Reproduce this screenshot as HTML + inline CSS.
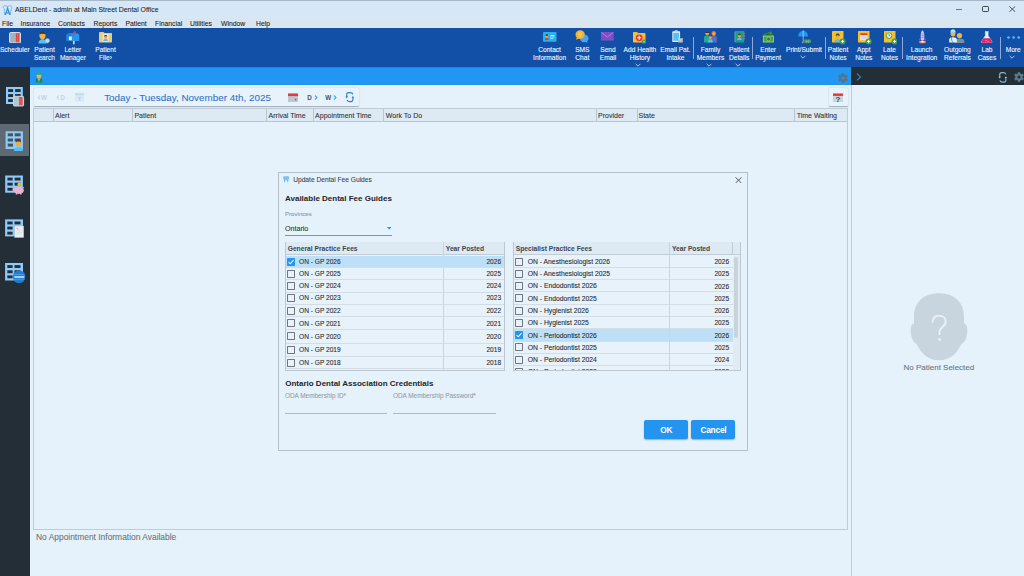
<!DOCTYPE html>
<html><head><meta charset="utf-8">
<style>
*{box-sizing:border-box;margin:0;padding:0}
html,body{width:1024px;height:576px;overflow:hidden;background:#e6f2fb;font-family:"Liberation Sans",sans-serif;color:#222}
.a{position:absolute}
.t{position:absolute;white-space:nowrap;line-height:1;-webkit-text-stroke:0.08px currentColor}
.t[style*="bold"]{-webkit-text-stroke:0}
#title{left:0;top:0;width:1024px;height:18px;background:#d6e8f7;border-top:1px solid #a9b8c6}
#menu{left:0;top:18px;width:1024px;height:10px;background:#d9e5ef}
#menu span{-webkit-text-stroke:0.08px currentColor;position:absolute;top:3.0px;font-size:6.8px;color:#222;line-height:1}
#tb{left:0;top:28px;width:1024px;height:39px;background:#1250a8}
.lbl{-webkit-text-stroke:0.1px currentColor;position:absolute;color:#f2f6fc;font-size:6.6px;line-height:8.4px;text-align:center;white-space:nowrap;transform:translateX(-50%)}
.sep{position:absolute;top:37px;width:1px;height:22px;background:#8fa9d3}
.chev{position:absolute;width:4px;height:4px;border-right:1px solid #c8d6ee;border-bottom:1px solid #c8d6ee;transform:rotate(45deg)}
#strip{left:30px;top:67px;width:821px;height:18px;background:linear-gradient(#1b7fd6,#2196f3 1.5px,#2196f3 17px,#1e8fe8)}
#rstrip{left:851px;top:67px;width:173px;height:18px;background:#232e37}
#side{left:0;top:67px;width:30px;height:509px;background:#232e37}
#grid{left:33px;top:108px;width:815px;height:422px;border:1px solid #c0cbd5;background:#e6f2fb}
#ghead{left:0;top:0;width:813px;height:13px;background:#dde9f3;border-bottom:1px solid #b9c5cf}
.col{position:absolute;top:0;width:1px;height:13px;background:#b9c5cf}
.ch{position:absolute;top:3px;font-size:7px;color:#333;line-height:1;white-space:nowrap;-webkit-text-stroke:0.08px currentColor}
#rpanel{left:851px;top:85px;width:173px;height:491px;border-left:1px solid #c3ccd4;background:#e6f2fb}
#dlg{left:278px;top:172px;width:470px;height:279px;border:1px solid #b6c0c9;background:#e6f2fb}
.dg{position:absolute;border:1px solid #b9c4ce;background:#e6f2fb;overflow:hidden}
.gh{position:absolute;left:0;top:0;height:14px;background:#dde9f3;border-bottom:1px solid #c3ced8}
.row{position:absolute;left:0;border-bottom:1px solid #d3dde6}
.cb{position:absolute;width:8px;height:8px;border:1px solid #6d747b;background:#eef5fb;border-radius:1px}
.cbon{background:#2196f3;border-color:#2196f3}
.rt{position:absolute;font-size:6.7px;color:#222;white-space:nowrap;line-height:1}
.yr{position:absolute;font-size:6.7px;color:#222;white-space:nowrap;line-height:1;text-align:right}
.btn{position:absolute;top:420px;height:19px;width:44px;background:#2394ef;border-radius:2px;box-shadow:0 1px 1.5px rgba(0,0,0,.3);color:#fff;font-weight:bold;font-size:8.4px;letter-spacing:-0.25px;text-align:center;line-height:21.6px;padding-left:0.8px}
</style></head><body>

<!-- Title bar -->
<div id="title" class="a">
  <svg class="a" style="left:2px;top:3.5px" width="11" height="10.5" viewBox="0 0 11 10.5"><path d="M1.2 2.8 C0.8 1 2.3 0.3 3.6 0.8 L5.5 1.5 L7.4 0.8 C8.7 0.3 10.2 1 9.8 2.8 C9.5 4.2 8.8 5.2 8.7 7 L8.3 9.8 M2.3 3.3 C2.5 4.5 2.2 5.5 2.3 7 L2.7 9.8" fill="none" stroke="#6fb3e6" stroke-width="0.9"/><path d="M3.2 10.2 L5.6 3.2 L8 10.2 M4.2 7.9 H7" fill="none" stroke="#3a8fd8" stroke-width="1.3"/></svg>
  <span class="t" style="left:15px;top:6px;font-size:6.9px;color:#1e1e1e">ABELDent - admin at Main Street Dental Office</span>
  <div class="a" style="left:956px;top:7.6px;width:6.3px;height:1px;background:#6f777e"></div>
  <div class="a" style="left:982.3px;top:4.8px;width:6.7px;height:6.1px;border:1px solid #3f4750;border-radius:1.2px"></div>
  <svg class="a" style="left:1009.2px;top:4.8px" width="6.6" height="6.2" viewBox="0 0 6.6 6.2"><path d="M0.3 0.3 L6.3 5.9 M6.3 0.3 L0.3 5.9" stroke="#3a3a3a" stroke-width="0.85"/></svg>
</div>

<!-- Menu -->
<div id="menu" class="a">
  <span style="left:2px">File</span>
  <span style="left:20.5px">Insurance</span>
  <span style="left:58px">Contacts</span>
  <span style="left:93.5px">Reports</span>
  <span style="left:125.5px">Patient</span>
  <span style="left:155px">Financial</span>
  <span style="left:190px">Utilities</span>
  <span style="left:221px">Window</span>
  <span style="left:256px">Help</span>
</div>

<!-- Toolbar -->
<div id="tb" class="a"></div>
<!-- Scheduler -->
<svg class="a" style="left:9px;top:31.5px" width="12" height="11.5" viewBox="0 0 12 11.5"><rect x="0.5" y="0.5" width="11" height="10.5" rx="1.2" fill="#a7b7c3" stroke="#d3dee6" stroke-width="1"/><rect x="6.8" y="1.2" width="3.6" height="9" fill="#e24a4a"/><path d="M3 1v9.5M5 1v9.5M8.6 1v9.5" stroke="#8ea0ad" stroke-width="0.4"/></svg>
<!-- Patient Search -->
<svg class="a" style="left:38px;top:30.5px" width="14" height="14" viewBox="0 0 14 14"><path d="M0.3 12.5 C0.6 9.5 2.5 8.3 4.4 8.3 C6.4 8.3 8.2 9.5 8.5 12.5Z" fill="#4fc3f7"/><rect x="3.5" y="7" width="2" height="2" fill="#e89a2c"/><ellipse cx="4.5" cy="4.6" rx="3.1" ry="3.6" fill="#f2b341"/><path d="M1.5 3.6 C1.5 1.2 3 0.4 4.5 0.4 C6 0.4 7.6 1.2 7.6 3.6 C6.5 2.4 3 2.4 1.5 3.6Z" fill="#2e3b48"/><circle cx="9.3" cy="9.8" r="2.3" fill="#bbdefb" stroke="#90a4ae" stroke-width="0.6"/><path d="M10.9 11.4 L12.6 13.2" stroke="#37474f" stroke-width="0.9"/></svg>
<!-- Letter Manager -->
<svg class="a" style="left:66px;top:30.5px" width="14" height="14" viewBox="0 0 14 14"><path d="M0.3 10 V5 C0.3 3.2 1.8 2.2 3.3 2.2 H10.5 C12 2.2 13.3 3.2 13.3 5 V10Z" fill="#2196f3"/><path d="M1.3 10 V5 C1.3 3.6 2.2 2.9 3.3 2.9 C4.5 2.9 5.5 3.6 5.5 5 V10Z" fill="#1976d2"/><rect x="2.8" y="5.4" width="3" height="3.9" fill="#e8eef2"/><rect x="6.9" y="10" width="1.8" height="3.3" fill="#e8c98a"/><path d="M7.6 1v4.5" stroke="#e53935" stroke-width="0.7"/><rect x="7.6" y="0.3" width="2.4" height="1.8" fill="#e53935"/></svg>
<!-- Patient File -->
<svg class="a" style="left:98.8px;top:32px" width="13.2" height="10.5" viewBox="0 0 13.2 10.5"><path d="M0 1 C0 0.4 0.4 0 1 0 H4.5 L5.5 1 H12.2 C12.8 1 13.2 1.4 13.2 2 V9.5 C13.2 10.1 12.8 10.5 12.2 10.5 H1 C0.4 10.5 0 10.1 0 9.5Z" fill="#e6c98c"/><rect x="3.5" y="2" width="6.2" height="7.8" fill="#f3e4bf"/><path d="M4.2 9 C4.4 7.3 5.5 6.8 6.6 6.8 C7.7 6.8 8.8 7.3 9 9Z" fill="#4fc3f7"/><ellipse cx="6.6" cy="5.1" rx="1.5" ry="1.8" fill="#f2a93b"/><path d="M5.1 4.6 C5.1 3.3 5.8 3 6.6 3 C7.4 3 8.1 3.3 8.1 4.6 C7.4 4 5.8 4 5.1 4.6Z" fill="#37474f"/></svg>
<!-- Contact Information -->
<svg class="a" style="left:543px;top:32px" width="13.5" height="9.7" viewBox="0 0 13.5 9.7"><rect x="0" y="0" width="13.5" height="9.7" rx="0.8" fill="#29b0f3"/><path d="M1.8 8 C1.9 6.6 2.8 6.1 3.8 6.1 C4.8 6.1 5.7 6.6 5.8 8Z" fill="#d84315"/><ellipse cx="3.8" cy="4.2" rx="1.3" ry="1.6" fill="#f2a93b"/><path d="M2.5 3.7 C2.5 2.6 3.1 2.2 3.8 2.2 C4.5 2.2 5.1 2.6 5.1 3.7Z" fill="#3e2723"/><path d="M7.3 3.5h4.2M7.3 5h4.2M7.3 6.5h2.6" stroke="#e3f2fd" stroke-width="0.7"/></svg>
<!-- SMS Chat -->
<svg class="a" style="left:575px;top:30px" width="14" height="13.5" viewBox="0 0 14 13.5"><path d="M5 5.5 C5 3.8 6.8 4.4 9 4.4 C11.6 4.4 13.5 6 13.5 8.2 C13.5 9.5 12.9 10.5 12 11.2 L12.8 13 L10.3 12 C9.9 12.1 9.5 12.2 9 12.2 C6.4 12.2 5 10.4 5 8.2Z" fill="#42a5f5"/><path d="M0.5 4.6 C0.5 2.2 2.6 0.3 5.2 0.3 C7.8 0.3 9.8 2.2 9.8 4.6 C9.8 7 7.8 8.9 5.2 8.9 C4.6 8.9 4.1 8.8 3.6 8.7 L1 9.7 L1.8 7.6 C1 6.8 0.5 5.8 0.5 4.6Z" fill="#f2b52f"/><path d="M3.3 3.3h3.8M3.3 4.7h3.8M3.3 6.1h2.5" stroke="#fbe3a0" stroke-width="0.6"/></svg>
<!-- Send Email -->
<svg class="a" style="left:601.3px;top:32.4px" width="12.7" height="8.6" viewBox="0 0 12.7 8.6"><rect x="0" y="0" width="12.7" height="8.6" fill="#7e4fc4"/><path d="M0.4 0.5 L6.35 5 L12.3 0.5" fill="none" stroke="#a98ae0" stroke-width="0.9"/></svg>
<!-- Add Health History -->
<svg class="a" style="left:632.8px;top:31.5px" width="13.5" height="12" viewBox="0 0 13.5 12"><path d="M0 1 C0 0.4 0.4 0 1 0 H4 L5 1 H11.5 C12.1 1 12.5 1.4 12.5 2 V9.5 C12.5 10.1 12.1 10.5 11.5 10.5 H1 C0.4 10.5 0 10.1 0 9.5Z" fill="#f0c02e"/><circle cx="6.2" cy="5.8" r="3.4" fill="#e53935"/><path d="M6.2 3.8v4M4.2 5.8h4" stroke="#fff" stroke-width="1.1"/><circle cx="11" cy="9.6" r="2.2" fill="#43a047"/><path d="M11 8.7v1.8M10.1 9.6h1.8" stroke="#c8e6c9" stroke-width="0.6"/></svg>
<!-- Email Pat Intake -->
<svg class="a" style="left:671.5px;top:29.8px" width="11" height="13" viewBox="0 0 11 13"><rect x="0.3" y="1.3" width="7.8" height="10.7" rx="0.6" fill="#eceff1"/><rect x="1.3" y="2.8" width="5.8" height="8" fill="#4fc3f7"/><rect x="2.5" y="0.3" width="3.4" height="1.8" rx="0.5" fill="#cfd8dc"/><rect x="6" y="8.3" width="4.8" height="4.2" fill="#b0bec5"/><path d="M6 8.3 L8.4 10.3 L10.8 8.3" fill="none" stroke="#eceff1" stroke-width="0.5"/></svg>
<!-- Family Members -->
<svg class="a" style="left:703.5px;top:31px" width="13" height="12" viewBox="0 0 13 12"><ellipse cx="3.2" cy="2.3" rx="1.8" ry="2.1" fill="#f2a93b"/><path d="M1.4 2 C1.4 0.6 2.3 0.2 3.2 0.2 C4.1 0.2 5 0.6 5 2Z" fill="#3e2723"/><path d="M0 11.5 V6.8 C0 5.4 1.2 4.6 3.2 4.6 C5.2 4.6 6.2 5.4 6.2 6.8 V11.5Z" fill="#26a69a"/><path d="M7 11.5 V6.8 C7 5.4 8 4.6 9.8 4.6 C11.6 4.6 12.8 5.4 12.8 6.8 V11.5Z" fill="#5c6bc0"/><ellipse cx="9.8" cy="2.4" rx="2.3" ry="2.4" fill="#ef6c38"/><ellipse cx="9.8" cy="2.7" rx="1.4" ry="1.7" fill="#f2a93b"/><ellipse cx="6.4" cy="6.6" rx="1.3" ry="1.4" fill="#f2a93b"/><path d="M4.3 11.5 V9.6 C4.3 8.7 5.2 8.2 6.4 8.2 C7.6 8.2 8.5 8.7 8.5 9.6 V11.5Z" fill="#4fc3f7"/></svg>
<!-- Patient Details -->
<svg class="a" style="left:734px;top:31px" width="11" height="11.5" viewBox="0 0 11 11.5"><rect x="0.8" y="0" width="9.4" height="11.5" rx="0.6" fill="#1e9e8a"/><path d="M10.2 1.5v2M10.2 4v2M10.2 6.5v2" stroke="#e57373" stroke-width="0.8"/><path d="M0.3 2h1.2M0.3 4h1.2M0.3 6h1.2M0.3 8h1.2M0.3 10h1.2" stroke="#cfd8dc" stroke-width="0.6"/><path d="M3.2 9 C3.3 7.3 4.3 6.7 5.5 6.7 C6.7 6.7 7.7 7.3 7.8 9Z" fill="#4fc3f7"/><ellipse cx="5.5" cy="4.6" rx="1.6" ry="2" fill="#f2a93b"/><path d="M3.9 4.2 C3.9 2.8 4.6 2.4 5.5 2.4 C6.4 2.4 7.1 2.8 7.1 4.2Z" fill="#37474f"/></svg>
<!-- Enter Payment -->
<svg class="a" style="left:761.8px;top:31px" width="12.5" height="12" viewBox="0 0 12.5 12"><path d="M0.3 4 L9.5 0.3 L11 4Z" fill="#2e7d32"/><path d="M1 3.2 L9 0.6 L10 3.3Z" fill="#388e3c"/><ellipse cx="5.8" cy="3.3" rx="1.6" ry="0.8" fill="#1b5e20"/><rect x="0.8" y="4.3" width="11.5" height="7.4" fill="#43a047"/><rect x="1.6" y="5.1" width="9.9" height="5.8" fill="none" stroke="#c8e6c9" stroke-width="0.5"/><ellipse cx="6.5" cy="8" rx="2" ry="1.9" fill="#2e7d32" stroke="#c8e6c9" stroke-width="0.5"/></svg>
<!-- Print/Submit -->
<svg class="a" style="left:798px;top:30px" width="13" height="13.5" viewBox="0 0 13 13.5"><path d="M0.3 6.8 C0.3 3 2.5 0.8 5.2 0.8 C7.9 0.8 10 3 10 6.8 C9.2 6 8.3 6 7.5 6.8 C6.7 6 5.9 6 5.2 6.8 C4.4 6 3.5 6 2.8 6.8 C2 6 1.1 6 0.3 6.8Z" fill="#2196f3"/><path d="M5.2 0.5v12 C5.2 13 4.2 13 4.2 12.2" fill="none" stroke="#cfd8dc" stroke-width="0.7"/><rect x="6.3" y="9.5" width="6.5" height="3.6" fill="#43a047" opacity="0.85"/><path d="M6.3 11.3h6.5M8.5 9.5v3.6M10.6 9.5v3.6" stroke="#a5d6a7" stroke-width="0.4"/></svg>
<!-- Patient Notes -->
<svg class="a" style="left:832.4px;top:31px" width="13.6" height="13.6" viewBox="0 0 13.6 13.6"><rect x="0" y="0" width="11.5" height="11.5" rx="0.4" fill="#f3c12d"/><path d="M2.5 11 C2.6 8.8 3.8 8 5.7 8 C7.6 8 8.8 8.8 8.9 11Z" fill="#4fc3f7"/><ellipse cx="5.7" cy="5.4" rx="2" ry="2.4" fill="#f2a93b"/><path d="M3.7 5 C3.7 3 4.6 2.4 5.7 2.4 C6.8 2.4 7.7 3 7.7 5 C7 4 4.4 4 3.7 5Z" fill="#37474f"/><circle cx="10.6" cy="10.4" r="3" fill="#43a047"/><path d="M10.6 8.9v3M9.1 10.4h3" stroke="#fff" stroke-width="1"/></svg>
<!-- Appt Notes -->
<svg class="a" style="left:858.2px;top:31px" width="13.6" height="13.6" viewBox="0 0 13.6 13.6"><rect x="0" y="0" width="11.5" height="11.5" rx="0.4" fill="#f3c12d"/><rect x="2.2" y="2.2" width="7.3" height="7" fill="#dfe6ea"/><rect x="2.2" y="2.2" width="7.3" height="1.8" fill="#e53935"/><path d="M3.5 5.5h4.8M3.5 7h4.8" stroke="#b0bec5" stroke-width="0.5"/><circle cx="10.6" cy="10.4" r="3" fill="#43a047"/><path d="M10.6 8.9v3M9.1 10.4h3" stroke="#fff" stroke-width="1"/></svg>
<!-- Late Notes -->
<svg class="a" style="left:883.9px;top:31px" width="13.6" height="13.6" viewBox="0 0 13.6 13.6"><rect x="0" y="0" width="11.5" height="11.5" rx="0.4" fill="#f3c12d"/><circle cx="5" cy="4.6" r="3.2" fill="#43a047"/><circle cx="5" cy="4.6" r="2.4" fill="#e3f2fd"/><path d="M5 3v1.8h1.2" fill="none" stroke="#37474f" stroke-width="0.6"/><circle cx="10.6" cy="10.4" r="3" fill="#43a047"/><path d="M10.6 8.9v3M9.1 10.4h3" stroke="#fff" stroke-width="1"/></svg>
<!-- Launch Integration -->
<svg class="a" style="left:917.5px;top:30px" width="9" height="14" viewBox="0 0 9 14"><path d="M4.5 0.3 C6 1.5 6.3 4 6.3 6 V10 H2.7 V6 C2.7 4 3 1.5 4.5 0.3Z" fill="#d1c4e9"/><path d="M2.7 7 L0.8 9.5 V10.5 H2.7Z M6.3 7 L8.2 9.5 V10.5 H6.3Z" fill="#7e57c2"/><path d="M3.6 4h1.8M3.6 5.7h1.8M3.6 7.4h1.8" stroke="#7e57c2" stroke-width="0.6"/><ellipse cx="4.5" cy="12" rx="3.5" ry="1.3" fill="#ff8a65"/><ellipse cx="4.5" cy="11.5" rx="1.4" ry="1" fill="#fff3e0"/></svg>
<!-- Outgoing Referrals -->
<svg class="a" style="left:949.3px;top:29px" width="15.5" height="14.2" viewBox="0 0 15.5 14.2"><path d="M6 14 V12 C6 10.3 7.8 9.5 10.5 9.5 C13.2 9.5 15.3 10.3 15.3 12 V14Z" fill="#78909c"/><circle cx="10.5" cy="6.6" r="2.6" fill="#f2b341"/><path d="M0.2 13.5 V10.8 C0.2 9 1.8 8.3 4 8.3 C6.2 8.3 7.8 9 7.8 10.8 V13.5Z" fill="#e3f2fd"/><path d="M2.5 8.6 C2.5 11 3 12.5 4 13.5" fill="none" stroke="#37474f" stroke-width="0.6"/><ellipse cx="4" cy="4.7" rx="2.4" ry="2.8" fill="#f2b341"/><path d="M1.5 3.2 C1.5 1 2.5 0.2 4 0.2 C5.5 0.2 6.5 1 6.5 3.2Z" fill="#b3e5fc"/><path d="M1.5 3.2h5" stroke="#81d4fa" stroke-width="0.8"/></svg>
<!-- Lab Cases -->
<svg class="a" style="left:981px;top:30.5px" width="11.5" height="12" viewBox="0 0 11.5 12"><path d="M4 0.6h3.5M4.4 0.6v4 L0.6 10.5 C0.3 11.2 0.7 11.8 1.4 11.8 H10.1 C10.8 11.8 11.2 11.2 10.9 10.5 L7.1 4.6 V0.6" fill="#e1f5fe" stroke="#b3e5fc" stroke-width="0.7"/><path d="M2.4 7.3 H9.1 L10.9 10.5 C11.2 11.2 10.8 11.8 10.1 11.8 H1.4 C0.7 11.8 0.3 11.2 0.6 10.5Z" fill="#e91e63"/><circle cx="5" cy="9.3" r="0.6" fill="#f8bbd0"/><circle cx="7" cy="10.2" r="0.5" fill="#f8bbd0"/></svg>
<!-- More -->
<svg class="a" style="left:1006.5px;top:35.5px" width="14" height="3" viewBox="0 0 14 3"><circle cx="1.5" cy="1.5" r="1.35" fill="#64b5f6"/><circle cx="6.6" cy="1.5" r="1.35" fill="#64b5f6"/><circle cx="11.7" cy="1.5" r="1.35" fill="#64b5f6"/></svg>
<div class="lbl" style="left:14.75px;top:45.9px">Scheduler</div>
<div class="lbl" style="left:44.5px;top:45.9px">Patient<br>Search</div>
<div class="lbl" style="left:72.9px;top:45.9px">Letter<br>Manager</div>
<div class="lbl" style="left:105.5px;top:45.9px">Patient<br>File›</div>
<div class="lbl" style="left:549.6px;top:45.9px">Contact<br>Information</div>
<div class="lbl" style="left:582.3px;top:45.9px">SMS<br>Chat</div>
<div class="lbl" style="left:608px;top:45.9px">Send<br>Email</div>
<div class="lbl" style="left:639.9px;top:45.9px">Add Health<br>History</div>
<svg class="a" style="left:635.40px;top:62.5px" width="6" height="4" viewBox="0 0 6 4"><path d="M0.6 0.8 L3 3.2 L5.4 0.8" fill="none" stroke="#c3d3ec" stroke-width="0.9"/></svg>
<div class="lbl" style="left:675.4px;top:45.9px">Email Pat.<br>Intake</div>
<div class="lbl" style="left:710.5px;top:45.9px">Family<br>Members</div>
<svg class="a" style="left:706.00px;top:62.5px" width="6" height="4" viewBox="0 0 6 4"><path d="M0.6 0.8 L3 3.2 L5.4 0.8" fill="none" stroke="#c3d3ec" stroke-width="0.9"/></svg>
<div class="lbl" style="left:739.2px;top:45.9px">Patient<br>Details</div>
<svg class="a" style="left:734.70px;top:62.5px" width="6" height="4" viewBox="0 0 6 4"><path d="M0.6 0.8 L3 3.2 L5.4 0.8" fill="none" stroke="#c3d3ec" stroke-width="0.9"/></svg>
<div class="lbl" style="left:768.2px;top:45.9px">Enter<br>Payment</div>
<div class="lbl" style="left:804px;top:45.9px">Print/Submit</div>
<svg class="a" style="left:799.50px;top:54.5px" width="6" height="4" viewBox="0 0 6 4"><path d="M0.6 0.8 L3 3.2 L5.4 0.8" fill="none" stroke="#c3d3ec" stroke-width="0.9"/></svg>
<div class="lbl" style="left:838px;top:45.9px">Patient<br>Notes</div>
<div class="lbl" style="left:863.8px;top:45.9px">Appt<br>Notes</div>
<div class="lbl" style="left:889.5px;top:45.9px">Late<br>Notes</div>
<div class="lbl" style="left:921.7px;top:45.9px">Launch<br>Integration</div>
<div class="lbl" style="left:957.4px;top:45.9px">Outgoing<br>Referrals</div>
<div class="lbl" style="left:987px;top:45.9px">Lab<br>Cases</div>
<div class="lbl" style="left:1013.2px;top:45.9px">More</div>
<svg class="a" style="left:1008.70px;top:54.5px" width="6" height="4" viewBox="0 0 6 4"><path d="M0.6 0.8 L3 3.2 L5.4 0.8" fill="none" stroke="#c3d3ec" stroke-width="0.9"/></svg>
<div class="sep" style="left:693.0px"></div>
<div class="sep" style="left:752.0px"></div>
<div class="sep" style="left:824.5px"></div>
<div class="sep" style="left:902.3px"></div>
<div class="sep" style="left:999.5px"></div>

<div id="rpanel" class="a"></div>
<!-- strips -->
<div id="strip" class="a"></div>
<div id="rstrip" class="a"></div>
<div id="side" class="a"></div>

<!-- strip icons -->
<svg class="a" style="left:35px;top:70.5px" width="8" height="12" viewBox="0 0 8 12"><path d="M0 12 V9.5 C0 8 1.5 7.4 4 7.4 C6.5 7.4 8 8 8 9.5 V12Z" fill="#1e9e8a"/><path d="M2.5 7.6 L4 10 L5.5 7.6" fill="#f2a93b"/><path d="M1.7 8 C1.7 10 2 10.8 2.6 11.2 M6.3 8 C6.3 10 6 10.8 5.4 11.2" stroke="#263238" stroke-width="0.6" fill="none"/><ellipse cx="4" cy="4.9" rx="2.4" ry="2.4" fill="#f2b341"/><path d="M1.4 3.8 C1.4 1 2.5 0 4 0 C5.5 0 6.6 1 6.6 3.8Z" fill="#26a69a"/></svg>
<svg class="a" style="left:838px;top:72.8px" width="10" height="10" viewBox="0 0 10 10"><path d="M3.95 1.56 L4.10 0.29 L5.90 0.29 L6.05 1.56 L7.46 2.37 L8.63 1.86 L9.53 3.42 L8.51 4.18 L8.51 5.82 L9.53 6.58 L8.63 8.14 L7.46 7.63 L6.05 8.44 L5.90 9.71 L4.10 9.71 L3.95 8.44 L2.54 7.63 L1.37 8.14 L0.47 6.58 L1.49 5.82 L1.49 4.18 L0.47 3.42 L1.37 1.86 L2.54 2.37Z" fill="#5a7384" stroke="#5a7384" stroke-width="0.5" stroke-linejoin="round"/><circle cx="5" cy="5" r="1.5" fill="#2196f3"/></svg>
<svg class="a" style="left:856px;top:73px" width="6" height="8" viewBox="0 0 6 8"><path d="M1 0.6 L4.6 4 L1 7.4" fill="none" stroke="#2f88cc" stroke-width="1.1"/></svg>
<svg class="a" style="left:998.3px;top:71.8px" width="10" height="11" viewBox="0 0 10 11"><path d="M7.9 2.4 C7.6 1.1 6.6 0.6 5 0.6 H3.6 C2.3 0.6 1.7 1.3 1.7 2.7 V5.1 M1.9 8.3 C2.2 9.6 3.2 10.1 4.8 10.1 H6.2 C7.4 10.1 7.9 9.4 7.9 8 V5.7" fill="none" stroke="#8db2cf" stroke-width="1.1"/><path d="M0.3 4.8 H3.1 L1.7 6.5Z M6.5 6.1 H9.3 L7.9 4.4Z" fill="#a3c6e4"/></svg>
<svg class="a" style="left:1013.5px;top:72.3px" width="10" height="10" viewBox="0 0 10 10"><path d="M3.95 1.56 L4.10 0.29 L5.90 0.29 L6.05 1.56 L7.46 2.37 L8.63 1.86 L9.53 3.42 L8.51 4.18 L8.51 5.82 L9.53 6.58 L8.63 8.14 L7.46 7.63 L6.05 8.44 L5.90 9.71 L4.10 9.71 L3.95 8.44 L2.54 7.63 L1.37 8.14 L0.47 6.58 L1.49 5.82 L1.49 4.18 L0.47 3.42 L1.37 1.86 L2.54 2.37Z" fill="#5c7a8e" stroke="#5c7a8e" stroke-width="0.5" stroke-linejoin="round"/><circle cx="5" cy="5" r="1.5" fill="#232e37"/></svg>

<!-- sidebar -->
<div class="a" style="left:0;top:123.5px;width:29px;height:32.5px;background:#5e6973"></div>
<svg class="a" style="left:0;top:84px" width="30" height="200" viewBox="0 0 30 200">
  <defs>
    <g id="gr"><rect x="6" y="0" width="16.8" height="17" fill="#90caf9"/><rect x="8.1" y="2.1" width="5" height="2.9" fill="#232e37"/><rect x="15.1" y="2.1" width="5.6" height="2.9" fill="#232e37"/><rect x="8.1" y="7.1" width="5" height="2.9" fill="#232e37"/><rect x="15.1" y="7.1" width="5.6" height="2.9" fill="#232e37"/><rect x="8.1" y="12.1" width="5" height="2.9" fill="#232e37"/><rect x="15.1" y="12.1" width="5.6" height="2.9" fill="#232e37"/></g>
  </defs>
  <use href="#gr" x="0" y="3"/>
  <rect x="13.4" y="12.3" width="10.2" height="9.7" rx="1" fill="#b5c4cf" stroke="#d5dde3" stroke-width="0.9"/><rect x="19" y="13" width="3.6" height="8.3" fill="#e35353"/>
</svg>
<svg class="a" style="left:0;top:130.5px" width="30" height="22" viewBox="0 0 30 22">
  <rect x="5.6" y="0.3" width="17.3" height="17.7" fill="#90caf9"/><rect x="7.7" y="2.3" width="5.3" height="3" fill="#4a545d"/><rect x="14.7" y="2.3" width="6" height="3" fill="#4a545d"/><rect x="7.7" y="7.5" width="5.3" height="3" fill="#4a545d"/><rect x="14.7" y="7.5" width="6" height="3" fill="#4a545d"/><rect x="7.7" y="12.6" width="5.3" height="3" fill="#4a545d"/>
  <path d="M14 20 C14.2 17 15.8 16 18.5 16 C21.2 16 22.8 17 23 20Z" fill="#4fc3f7"/><ellipse cx="18.5" cy="12.3" rx="2.6" ry="3.1" fill="#f2a93b"/><path d="M15.9 11.5 C15.9 8.6 17 7.8 18.5 7.8 C20 7.8 21.1 8.6 21.1 11.5 C20.3 10.3 16.7 10.3 15.9 11.5Z" fill="#37474f"/>
</svg>
<svg class="a" style="left:0;top:174.5px" width="30" height="22" viewBox="0 0 30 22">
  <rect x="5.2" y="0.5" width="17.7" height="17.2" fill="#90caf9"/><rect x="7.4" y="2.6" width="5.3" height="2.9" fill="#232e37"/><rect x="14.6" y="2.6" width="6" height="2.9" fill="#232e37"/><rect x="7.4" y="7.7" width="5.3" height="2.9" fill="#232e37"/><rect x="14.6" y="7.7" width="6" height="2.9" fill="#232e37"/><rect x="7.4" y="12.8" width="5.3" height="2.9" fill="#232e37"/>
  <ellipse cx="18.8" cy="15.3" rx="5" ry="3.6" fill="#eeb1d2"/><circle cx="14" cy="14.5" r="1.3" fill="#eeb1d2"/><rect x="15.7" y="17.5" width="1.6" height="2" fill="#eeb1d2"/><rect x="20" y="17.5" width="1.6" height="2" fill="#eeb1d2"/><path d="M22.5 11.5 L24 12.2 L23.5 14Z" fill="#eeb1d2"/><circle cx="19.3" cy="9.3" r="1.9" fill="#f5c000"/>
</svg>
<svg class="a" style="left:0;top:218.5px" width="30" height="20" viewBox="0 0 30 20">
  <rect x="5.1" y="0.4" width="17.9" height="17" fill="#90caf9"/><rect x="7.3" y="2.5" width="5.3" height="2.9" fill="#232e37"/><rect x="14.5" y="2.5" width="6" height="2.9" fill="#232e37"/><rect x="7.3" y="7.6" width="5.3" height="2.9" fill="#232e37"/><rect x="7.3" y="12.7" width="5.3" height="2.9" fill="#232e37"/>
  <rect x="14.7" y="7" width="9" height="11.5" fill="#eceff1" stroke="#b0bec5" stroke-width="0.5"/><path d="M16.5 9.3 L18.5 10.3" stroke="#e57373" stroke-width="0.7"/><path d="M16.3 12h5.5M16.3 13.6h5.5M16.3 15.2h5.5" stroke="#cfd8dc" stroke-width="0.5"/>
</svg>
<svg class="a" style="left:0;top:262.5px" width="30" height="21" viewBox="0 0 30 21">
  <rect x="5.1" y="0" width="17.9" height="17.5" fill="#90caf9"/><rect x="7.3" y="2.1" width="5.3" height="2.9" fill="#232e37"/><rect x="14.5" y="2.1" width="6" height="2.9" fill="#232e37"/><rect x="7.3" y="7.3" width="5.3" height="2.9" fill="#232e37"/><rect x="14.5" y="7.3" width="6" height="2.9" fill="#232e37"/><rect x="7.3" y="12.4" width="5.3" height="2.9" fill="#232e37"/>
  <circle cx="19.1" cy="13.8" r="6.3" fill="#1e7fd8"/><path d="M13.6 11.5 H24.6 M13.6 16.2 H24.6" stroke="#64b5f6" stroke-width="0.5"/><text x="19.1" y="15.3" font-family="Liberation Sans" font-size="4.2" font-weight="bold" fill="#fff" text-anchor="middle">www</text>
</svg>

<!-- date card -->
<div class="a" style="left:33.5px;top:88px;width:325.5px;height:18px;background:#e7f2fb;border-radius:1px;box-shadow:0 0.6px 1.2px rgba(60,80,100,.45)"></div>
<svg class="a" style="left:36.8px;top:95.2px" width="4" height="5" viewBox="0 0 4 5"><path d="M3 0.5 L1.2 2.5 L3 4.5" fill="none" stroke="#b5d5f2" stroke-width="1.1"/></svg>
<span class="t" style="left:41px;top:95px;font-size:6.3px;font-weight:bold;color:#c9d3db">W</span>
<svg class="a" style="left:55.8px;top:95.2px" width="4" height="5" viewBox="0 0 4 5"><path d="M3 0.5 L1.2 2.5 L3 4.5" fill="none" stroke="#b5d5f2" stroke-width="1.1"/></svg>
<span class="t" style="left:60.5px;top:95px;font-size:6.3px;font-weight:bold;color:#c9d3db">D</span>
<svg class="a" style="left:75px;top:93.3px" width="9" height="8.5" viewBox="0 0 9 8.5"><rect x="0" y="0" width="9" height="8.5" fill="#d9e9f7"/><rect x="0" y="0" width="9" height="2.2" fill="#c2ddf4"/><text x="4.5" y="7.6" font-family="Liberation Sans" font-size="5" font-weight="bold" fill="#b6cde2" text-anchor="middle">T</text></svg>
<span class="t" style="left:104.2px;top:92.5px;font-size:9.88px;color:#3373c6">Today - Tuesday, November 4th, 2025</span>
<svg class="a" style="left:288.3px;top:92.8px" width="10" height="9" viewBox="0 0 10 9"><rect x="0" y="0.5" width="10" height="8.5" rx="0.5" fill="#b8c9d6"/><rect x="0" y="0.5" width="10" height="2.6" fill="#e53935"/><rect x="2.3" y="0" width="0.8" height="1.3" fill="#90a4ae"/><rect x="6.9" y="0" width="0.8" height="1.3" fill="#90a4ae"/><rect x="6.8" y="5.8" width="1.5" height="1.5" fill="#e53935"/></svg>
<span class="t" style="left:307.3px;top:95px;font-size:6.3px;font-weight:bold;color:#4a5560">D</span>
<svg class="a" style="left:313.8px;top:95px" width="4" height="5" viewBox="0 0 4 5"><path d="M1 0.5 L3 2.5 L1 4.5" fill="none" stroke="#42a5f5" stroke-width="1.1"/></svg>
<span class="t" style="left:325.3px;top:95px;font-size:6.3px;font-weight:bold;color:#4a5560">W</span>
<svg class="a" style="left:332.5px;top:95px" width="4" height="5" viewBox="0 0 4 5"><path d="M1 0.5 L3 2.5 L1 4.5" fill="none" stroke="#42a5f5" stroke-width="1.1"/></svg>
<svg class="a" style="left:344.5px;top:92.3px" width="10" height="10.5" viewBox="0 0 10 10.5"><path d="M7.9 2.3 C7.6 1 6.6 0.6 5 0.6 H3.6 C2.3 0.6 1.7 1.3 1.7 2.6 V4.9 M1.9 7.9 C2.2 9.2 3.2 9.6 4.8 9.6 H6.2 C7.4 9.6 7.9 8.9 7.9 7.6 V5.4" fill="none" stroke="#2b7bd6" stroke-width="1.15"/><path d="M0.3 4.6 H3.1 L1.7 6.3Z M6.5 5.8 H9.3 L7.9 4.1Z" fill="#2b7bd6"/></svg>
<!-- help btn -->
<div class="a" style="left:829px;top:88px;width:18.5px;height:18px;background:#e7f2fb;border-radius:1px;box-shadow:0 0.6px 1.2px rgba(60,80,100,.45)"></div>
<svg class="a" style="left:833.3px;top:92.7px" width="10" height="9.3" viewBox="0 0 10 9.3"><rect x="0" y="0.5" width="10" height="8.8" rx="0.5" fill="#c5d5e2"/><rect x="0" y="0.5" width="10" height="2.4" fill="#e53935"/><text x="5" y="9.2" font-family="Liberation Sans" font-size="8" font-weight="bold" fill="#37474f" text-anchor="middle">?</text></svg>

<!-- right panel content -->
<svg class="a" style="left:910px;top:292.5px" width="58" height="68" viewBox="0 0 58 68"><path d="M29 0.3 C44 0.3 54 9 54 24 L54 30.5 C56.5 31 57.5 34 57.3 38 C57 44.5 55 49.5 51.3 51 C47 61 39 67.3 29 67.3 C19 67.3 11 61 6.7 51 C3 49.5 1 44.5 0.7 38 C0.5 34 1.5 31 4 30.5 L4 24 C4 9 14 0.3 29 0.3Z" fill="#c9d5de"/><path d="M22.6 29.5 C22.6 25 25.5 22.8 29.2 22.8 C33 22.8 35.8 25.2 35.8 28.8 C35.8 33.5 29.5 34 29.5 39 L29.5 42" fill="none" stroke="#e8eff5" stroke-width="2.1"/><circle cx="29.5" cy="46.4" r="1.5" fill="#e8eff5"/></svg>
<span class="t" style="left:903.5px;top:363.8px;font-size:8px;color:#6c737a">No Patient Selected</span>

<!-- main grid -->
<div id="grid" class="a">
  <div id="ghead" class="a">
    <div class="col" style="left:18.7px"></div>
    <div class="col" style="left:97.6px"></div>
    <div class="col" style="left:231.9px"></div>
    <div class="col" style="left:278.5px"></div>
    <div class="col" style="left:348.7px"></div>
    <div class="col" style="left:561.7px"></div>
    <div class="col" style="left:602.8px"></div>
    <div class="col" style="left:760.4px"></div>
    <span class="ch" style="left:21px">Alert</span>
    <span class="ch" style="left:100.4px">Patient</span>
    <span class="ch" style="left:234.6px">Arrival Time</span>
    <span class="ch" style="left:281.1px">Appointment Time</span>
    <span class="ch" style="left:351.8px">Work To Do</span>
    <span class="ch" style="left:564.1px">Provider</span>
    <span class="ch" style="left:604.5px">State</span>
    <span class="ch" style="left:762.7px">Time Waiting</span>
  </div>
</div>
<span class="t" style="left:36px;top:533.2px;font-size:8.43px;color:#6c737a">No Appointment Information Available</span>


<!-- dialog -->
<div id="dlg" class="a"></div>
<svg class="a" style="left:282.5px;top:176.3px" width="6.3" height="6.5" viewBox="0 0 6.3 6.5"><path d="M0.3 1.5 C0.3 0.4 1.2 0 2 0.2 L3.15 0.6 L4.3 0.2 C5.1 0 6 0.4 6 1.5 C6 2.8 5.4 3.5 5.3 4.5 L5 6.3 C4.9 6.5 4.5 6.5 4.4 6.3 L3.9 4.3 C3.8 4 3.5 3.9 3.15 3.9 C2.8 3.9 2.5 4 2.4 4.3 L1.9 6.3 C1.8 6.5 1.4 6.5 1.3 6.3 L1 4.5 C0.9 3.5 0.3 2.8 0.3 1.5Z" fill="#64b5f6"/><path d="M2.1 1v3M4.2 1v3" stroke="#e3f2fd" stroke-width="0.4"/></svg>
<span class="t" style="left:293.2px;top:176.5px;font-size:6.65px;color:#3a3f45">Update Dental Fee Guides</span>
<svg class="a" style="left:734.7px;top:176.6px" width="7" height="6.5" viewBox="0 0 7 6.5"><path d="M0.4 0.3 L6.6 6.2 M6.6 0.3 L0.4 6.2" stroke="#333" stroke-width="0.8"/></svg>
<span class="t" style="left:285px;top:195.3px;font-size:8px;font-weight:bold;color:#1f242a">Available Dental Fee Guides</span>
<span class="t" style="left:285px;top:211px;font-size:6.1px;color:#8e979e">Provinces</span>
<span class="t" style="left:285px;top:226.4px;font-size:7.1px;color:#2a2f35">Ontario</span>
<svg class="a" style="left:386.8px;top:227.2px" width="4.6" height="2.6" viewBox="0 0 4.6 2.6"><path d="M0 0 H4.6 L2.3 2.6Z" fill="#2196f3"/></svg>
<div class="a" style="left:285px;top:234.6px;width:106.5px;height:1.3px;background:#42a5f5"></div>
<div class="a" style="left:285px;top:241.5px;width:219.5px;height:129.5px;border:1px solid #bdc7d0;background:#e7f2fb"></div>
<div class="a" style="left:285.8px;top:242.3px;width:217.9px;height:13.00000000000001px;background:#dde9f3;border-bottom:1px solid #c1ccd6"></div>
<div class="a" style="left:443.3px;top:242.3px;width:1px;height:127.9px;background:#cbd5de"></div>
<span class="t" style="left:287.7px;top:245.7px;font-size:6.7px;font-weight:bold;color:#3b4550">General Practice Fees</span>
<span class="t" style="left:445.8px;top:245.7px;font-size:6.7px;font-weight:bold;color:#3b4550">Year Posted</span>
<div class="a" style="left:286px;top:255.8px;width:217.5px;height:11.599999999999966px;background:#bde0f8"></div>
<div class="a" style="left:286px;top:266.9px;width:217.5px;height:1px;background:#d2dde6"></div>
<svg class="a" style="left:287px;top:257.6px" width="8" height="8" viewBox="0 0 8 8"><rect x="0" y="0" width="8" height="8" rx="0.8" fill="#2196f3"/><path d="M1.6 4.1 L3.3 5.8 L6.5 2.2" fill="none" stroke="#fff" stroke-width="1.05"/></svg>
<span class="t" style="left:299px;top:258.58px;font-size:6.6px;color:#23282d">ON - GP 2026</span>
<span class="t" style="left:501.1px;top:258.58px;font-size:6.6px;color:#23282d;transform:translateX(-100%)">2026</span>
<div class="a" style="left:286px;top:278.9px;width:217.5px;height:1px;background:#d2dde6"></div>
<div class="a" style="left:287px;top:269.7px;width:8px;height:8px;border:1px solid #6f767d;border-radius:0.8px"></div>
<span class="t" style="left:299px;top:270.63px;font-size:6.6px;color:#23282d">ON - GP 2025</span>
<span class="t" style="left:501.1px;top:270.63px;font-size:6.6px;color:#23282d;transform:translateX(-100%)">2025</span>
<div class="a" style="left:286px;top:291.5px;width:217.5px;height:1px;background:#d2dde6"></div>
<div class="a" style="left:287px;top:281.7px;width:8px;height:8px;border:1px solid #6f767d;border-radius:0.8px"></div>
<span class="t" style="left:299px;top:282.93px;font-size:6.6px;color:#23282d">ON - GP 2024</span>
<span class="t" style="left:501.1px;top:282.93px;font-size:6.6px;color:#23282d;transform:translateX(-100%)">2024</span>
<div class="a" style="left:286px;top:303.8px;width:217.5px;height:1px;background:#d2dde6"></div>
<div class="a" style="left:287px;top:294.3px;width:8px;height:8px;border:1px solid #6f767d;border-radius:0.8px"></div>
<span class="t" style="left:299px;top:295.38px;font-size:6.6px;color:#23282d">ON - GP 2023</span>
<span class="t" style="left:501.1px;top:295.38px;font-size:6.6px;color:#23282d;transform:translateX(-100%)">2023</span>
<div class="a" style="left:286px;top:316.4px;width:217.5px;height:1px;background:#d2dde6"></div>
<div class="a" style="left:287px;top:306.6px;width:8px;height:8px;border:1px solid #6f767d;border-radius:0.8px"></div>
<span class="t" style="left:299px;top:307.83px;font-size:6.6px;color:#23282d">ON - GP 2022</span>
<span class="t" style="left:501.1px;top:307.83px;font-size:6.6px;color:#23282d;transform:translateX(-100%)">2022</span>
<div class="a" style="left:286px;top:329.2px;width:217.5px;height:1px;background:#d2dde6"></div>
<div class="a" style="left:287px;top:319.2px;width:8px;height:8px;border:1px solid #6f767d;border-radius:0.8px"></div>
<span class="t" style="left:299px;top:320.53px;font-size:6.6px;color:#23282d">ON - GP 2021</span>
<span class="t" style="left:501.1px;top:320.53px;font-size:6.6px;color:#23282d;transform:translateX(-100%)">2021</span>
<div class="a" style="left:286px;top:343.1px;width:217.5px;height:1px;background:#d2dde6"></div>
<div class="a" style="left:287px;top:332.0px;width:8px;height:8px;border:1px solid #6f767d;border-radius:0.8px"></div>
<span class="t" style="left:299px;top:333.88px;font-size:6.6px;color:#23282d">ON - GP 2020</span>
<span class="t" style="left:501.1px;top:333.88px;font-size:6.6px;color:#23282d;transform:translateX(-100%)">2020</span>
<div class="a" style="left:286px;top:356.1px;width:217.5px;height:1px;background:#d2dde6"></div>
<div class="a" style="left:287px;top:345.90000000000003px;width:8px;height:8px;border:1px solid #6f767d;border-radius:0.8px"></div>
<span class="t" style="left:299px;top:347.33px;font-size:6.6px;color:#23282d">ON - GP 2019</span>
<span class="t" style="left:501.1px;top:347.33px;font-size:6.6px;color:#23282d;transform:translateX(-100%)">2019</span>
<div class="a" style="left:286px;top:367.9px;width:217.5px;height:1px;background:#d2dde6"></div>
<div class="a" style="left:287px;top:358.90000000000003px;width:8px;height:8px;border:1px solid #6f767d;border-radius:0.8px"></div>
<span class="t" style="left:299px;top:359.73px;font-size:6.6px;color:#23282d">ON - GP 2018</span>
<span class="t" style="left:501.1px;top:359.73px;font-size:6.6px;color:#23282d;transform:translateX(-100%)">2018</span>
<div class="a" style="left:513px;top:241.5px;width:228px;height:129.5px;border:1px solid #bdc7d0;background:#e7f2fb"></div>
<div class="a" style="left:513.8px;top:242.3px;width:226.4px;height:13.00000000000001px;background:#dde9f3;border-bottom:1px solid #c1ccd6"></div>
<div class="a" style="left:669.4px;top:242.3px;width:1px;height:127.9px;background:#cbd5de"></div>
<div class="a" style="left:732.2px;top:242.3px;width:1px;height:13.00000000000001px;background:#c1ccd6"></div>
<span class="t" style="left:515.7px;top:245.7px;font-size:6.7px;font-weight:bold;color:#3b4550">Specialist Practice Fees</span>
<span class="t" style="left:671.9px;top:245.7px;font-size:6.7px;font-weight:bold;color:#3b4550">Year Posted</span>
<div class="a" style="left:514px;top:255.3px;width:219px;height:114.89999999999998px;overflow:hidden"><div class="a" style="left:0px;top:11.699999999999989px;width:219px;height:1px;background:#d2dde6"></div><div class="a" style="left:1px;top:2.3000000000000114px;width:8px;height:8px;border:1px solid #6f767d;border-radius:0.8px"></div><span class="t" style="left:13.700000000000045px;top:3.65px;font-size:6.8px;color:#23282d">ON - Anesthesiologist 2026</span><span class="t" style="left:215.10000000000002px;top:3.83px;font-size:6.6px;color:#23282d;transform:translateX(-100%)">2026</span><div class="a" style="left:0px;top:23.899999999999977px;width:219px;height:1px;background:#d2dde6"></div><div class="a" style="left:1px;top:14.5px;width:8px;height:8px;border:1px solid #6f767d;border-radius:0.8px"></div><span class="t" style="left:13.700000000000045px;top:15.85px;font-size:6.8px;color:#23282d">ON - Anesthesiologist 2025</span><span class="t" style="left:215.10000000000002px;top:16.03px;font-size:6.6px;color:#23282d;transform:translateX(-100%)">2025</span><div class="a" style="left:0px;top:36.19999999999999px;width:219px;height:1px;background:#d2dde6"></div><div class="a" style="left:1px;top:26.69999999999999px;width:8px;height:8px;border:1px solid #6f767d;border-radius:0.8px"></div><span class="t" style="left:13.700000000000045px;top:28.10px;font-size:6.8px;color:#23282d">ON - Endodontist 2026</span><span class="t" style="left:215.10000000000002px;top:28.28px;font-size:6.6px;color:#23282d;transform:translateX(-100%)">2026</span><div class="a" style="left:0px;top:48.5px;width:219px;height:1px;background:#d2dde6"></div><div class="a" style="left:1px;top:39.0px;width:8px;height:8px;border:1px solid #6f767d;border-radius:0.8px"></div><span class="t" style="left:13.700000000000045px;top:40.40px;font-size:6.8px;color:#23282d">ON - Endodontist 2025</span><span class="t" style="left:215.10000000000002px;top:40.58px;font-size:6.6px;color:#23282d;transform:translateX(-100%)">2025</span><div class="a" style="left:0px;top:60.80000000000001px;width:219px;height:1px;background:#d2dde6"></div><div class="a" style="left:1px;top:51.30000000000001px;width:8px;height:8px;border:1px solid #6f767d;border-radius:0.8px"></div><span class="t" style="left:13.700000000000045px;top:52.70px;font-size:6.8px;color:#23282d">ON - Hygienist 2026</span><span class="t" style="left:215.10000000000002px;top:52.88px;font-size:6.6px;color:#23282d;transform:translateX(-100%)">2026</span><div class="a" style="left:0px;top:73.09999999999997px;width:219px;height:1px;background:#d2dde6"></div><div class="a" style="left:1px;top:63.60000000000002px;width:8px;height:8px;border:1px solid #6f767d;border-radius:0.8px"></div><span class="t" style="left:13.700000000000045px;top:65.00px;font-size:6.8px;color:#23282d">ON - Hygienist 2025</span><span class="t" style="left:215.10000000000002px;top:65.18px;font-size:6.6px;color:#23282d;transform:translateX(-100%)">2025</span><div class="a" style="left:0px;top:74.09999999999997px;width:219px;height:11.800000000000011px;background:#bde0f8"></div><div class="a" style="left:0px;top:85.39999999999998px;width:219px;height:1px;background:#d2dde6"></div><svg class="a" style="left:1px;top:75.89999999999998px" width="8" height="8" viewBox="0 0 8 8"><rect x="0" y="0" width="8" height="8" rx="0.8" fill="#2196f3"/><path d="M1.6 4.1 L3.3 5.8 L6.5 2.2" fill="none" stroke="#fff" stroke-width="1.05"/></svg><span class="t" style="left:13.700000000000045px;top:77.30px;font-size:6.8px;color:#23282d">ON - Periodontist 2026</span><span class="t" style="left:215.10000000000002px;top:77.48px;font-size:6.6px;color:#23282d;transform:translateX(-100%)">2026</span><div class="a" style="left:0px;top:97.69999999999999px;width:219px;height:1px;background:#d2dde6"></div><div class="a" style="left:1px;top:88.19999999999999px;width:8px;height:8px;border:1px solid #6f767d;border-radius:0.8px"></div><span class="t" style="left:13.700000000000045px;top:89.60px;font-size:6.8px;color:#23282d">ON - Periodontist 2025</span><span class="t" style="left:215.10000000000002px;top:89.78px;font-size:6.6px;color:#23282d;transform:translateX(-100%)">2025</span><div class="a" style="left:0px;top:110.0px;width:219px;height:1px;background:#d2dde6"></div><div class="a" style="left:1px;top:100.5px;width:8px;height:8px;border:1px solid #6f767d;border-radius:0.8px"></div><span class="t" style="left:13.700000000000045px;top:101.90px;font-size:6.8px;color:#23282d">ON - Periodontist 2024</span><span class="t" style="left:215.10000000000002px;top:102.08px;font-size:6.6px;color:#23282d;transform:translateX(-100%)">2024</span><div class="a" style="left:0px;top:122.30000000000001px;width:219px;height:1px;background:#d2dde6"></div><div class="a" style="left:1px;top:112.80000000000001px;width:8px;height:8px;border:1px solid #6f767d;border-radius:0.8px"></div><span class="t" style="left:13.700000000000045px;top:114.2px;font-size:6.8px;color:#23282d">ON - Periodontist 2023</span><span class="t" style="left:215.10000000000002px;top:114.2px;font-size:6.6px;color:#23282d;transform:translateX(-100%)">2023</span><div class="a" style="left:155.4px;top:0;width:1px;height:120px;background:#cbd5de"></div></div>
<div class="a" style="left:733px;top:255.5px;width:7.2px;height:114.7px;background:#e1ebf3"></div>
<div class="a" style="left:734.1px;top:256.5px;width:4.4px;height:81.5px;background:#c8d3dc;border-radius:2px"></div>
<span class="t" style="left:285.2px;top:379.5px;font-size:8px;font-weight:bold;color:#1f242a">Ontario Dental Association Credentials</span>
<span class="t" style="left:285px;top:393px;font-size:6.4px;color:#949da4">ODA Membership ID*</span>
<span class="t" style="left:393px;top:393px;font-size:6.4px;color:#949da4">ODA Membership Password*</span>
<div class="a" style="left:285px;top:413px;width:102px;height:1.3px;background:#b0bac3"></div>
<div class="a" style="left:393px;top:413px;width:102.5px;height:1.3px;background:#b0bac3"></div>
<div class="btn" style="left:644px">OK</div>
<div class="btn" style="left:691px">Cancel</div>

</body></html>
